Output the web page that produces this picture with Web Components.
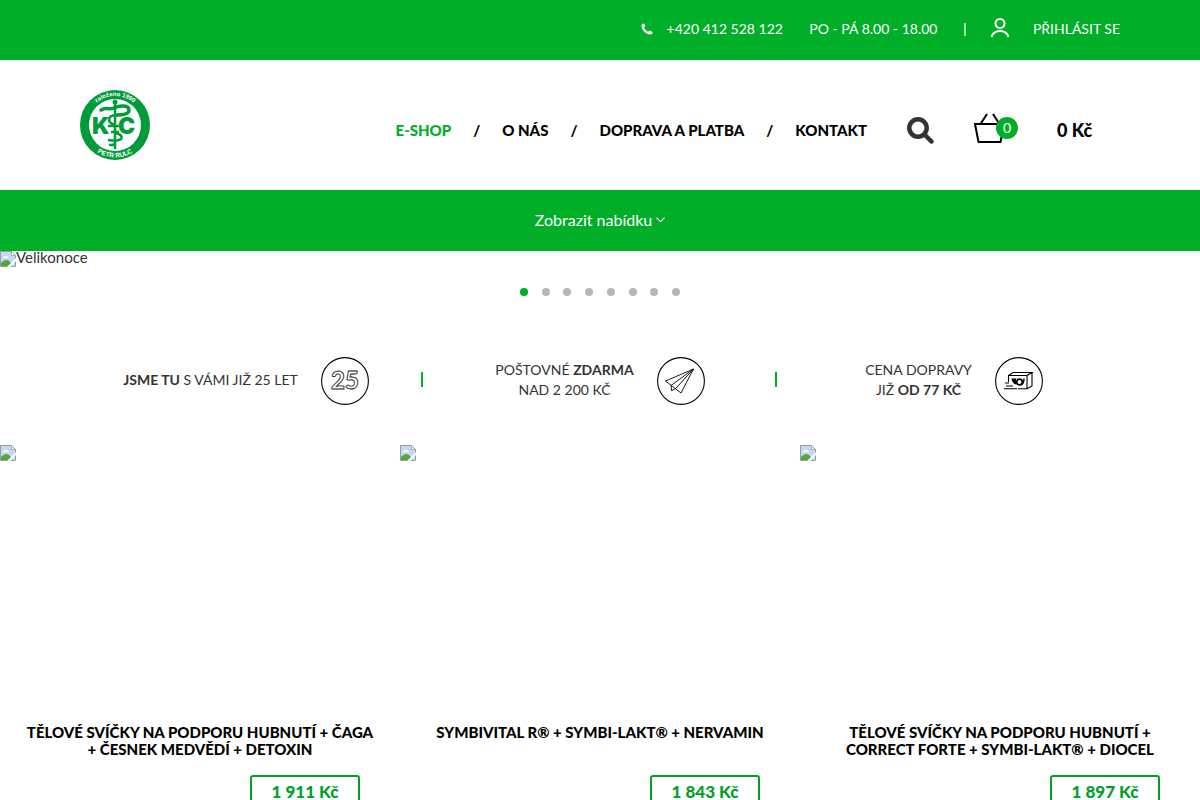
<!DOCTYPE html>
<html lang="cs">
<head>
<meta charset="utf-8">
<meta name="viewport" content="width=device-width, initial-scale=1">
<title>KC Petr Rulc</title>
<style>
body { margin: 0; background: #fff; color: #333; font: 14px/20px Lato, "Noto Sans", sans-serif; }
</style>
</head>
<body>
<shop-topbar></shop-topbar>
<shop-header></shop-header>
<shop-menu-toggle></shop-menu-toggle>
<main>
  <shop-carousel label="Velikonoce" count="8"></shop-carousel>
  <shop-benefits>
    <shop-benefit icon="years"><b>JSME TU</b> S VÁMI JIŽ 25 LET</shop-benefit>
    <shop-benefit icon="plane">POŠTOVNÉ <b>ZDARMA</b><br>NAD 2 200 KČ</shop-benefit>
    <shop-benefit icon="box">CENA DOPRAVY<br>JIŽ <b>OD 77 KČ</b></shop-benefit>
  </shop-benefits>
  <shop-products>
    <shop-product price="1 911 Kč">TĚLOVÉ SVÍČKY NA PODPORU HUBNUTÍ + ČAGA<br>+ ČESNEK MEDVĚDÍ + DETOXIN</shop-product>
    <shop-product price="1 843 Kč">SYMBIVITAL R® + SYMBI-LAKT® + NERVAMIN</shop-product>
    <shop-product price="1 897 Kč">TĚLOVÉ SVÍČKY NA PODPORU HUBNUTÍ +<br>CORRECT FORTE + SYMBI-LAKT® + DIOCEL</shop-product>
  </shop-products>
</main>
<script>
const base = `
  * { box-sizing: border-box; }
  a { color: inherit; text-decoration: none; }
  button { font: inherit; color: inherit; background: none; border: 0; padding: 0; cursor: pointer; }
  svg { display: block; flex: none; }
`;
function define(name, render) {
  customElements.define(name, class extends HTMLElement {
    connectedCallback() {
      if (this.shadowRoot) return;
      const t = document.createElement('template');
      const [css, html] = render(this);
      t.innerHTML = `<style>${base}${css}</style>${html}`;
      this.attachShadow({ mode: 'open' }).append(t.content.cloneNode(true));
    }
  });
}

define('shop-topbar', () => [`
  :host { display: flex; align-items: center; justify-content: flex-end; gap: 24px; height: 60px; padding: 0 80px 2px; box-sizing: border-box; background: #00ae28; color: #fff; }
  .phone { display: flex; align-items: center; gap: 14px; }
  .login { display: flex; align-items: center; gap: 23px; }
  .hours { min-width: 133px; text-align: center; }
  .sep { width: 2px; height: 13px; background: #a6e3b3; }
  .user { margin-bottom: 2px; }
`, `
  <a class="phone" href="tel:+420412528122">
    <svg width="12" height="12" viewBox="0 0 12 12"><path fill="#fff" d="M11.500 9.300c0 .9-.7 2.200-2.400 2.200C5.400 11.500.5 7 .5 3 .5 1.300 1.600.5 2.700.5c.5 0 .6.2.8.6l.9 1.900c.3.6-1.200 1.300-1.200 1.700C3.200 5.400 5.900 8.400 7 8.700c.5.100 1.200-1.300 1.700-1.100.5.100 2.800 1.300 2.800 1.700z"/></svg>
    <span>+420 412 528 122</span>
  </a>
  <span class="hours">PO - PÁ 8.00 - 18.00</span>
  <span class="sep"></span>
  <a class="login" href="#login">
    <svg class="user" width="20" height="20" viewBox="0 0 20 20" fill="none" stroke="#fff" stroke-width="2"><circle cx="10" cy="5.500" r="4.500"/><path d="M1.500 19c1.200-4 4.700-6 8.500-6s7.300 2 8.500 6"/></svg>
    <span>PŘIHLÁSIT SE</span>
  </a>
`]);

define('shop-header', () => [`
  :host { display: flex; align-items: center; justify-content: space-between; min-height: 130px; padding: 0 106px 0 80px; color: #000; font-size: 15px; font-weight: 900; }
  .right, nav, .basket { display: flex; align-items: center; }
  .right { gap: 40px; padding-top: 10px; }
  nav { gap: 22px; }
  .on { color: #00ae28; }
  .basket { gap: 39px; font-size: 18px; }
  .total { min-width: 37px; }
  .icon { position: relative; width: 44px; height: 34px; }
  .badge { position: absolute; right: 0; top: 4px; width: 22px; height: 22px; border-radius: 50%; background: #00ae28; color: #fff; font: 14px/22px Lato, sans-serif; text-align: center; }
`, `
  <a href="#home" aria-label="KC Petr Rulc">
    <svg width="70" height="70" viewBox="0 0 70 70">
      <defs><path id="top" d="M6 35a29 29 0 0 1 58 0"/><path id="bottom" d="M2.500 35a32.500 32.500 0 0 0 65 0"/></defs>
      <circle cx="35" cy="35" r="35" fill="#009b3a"/><circle cx="35" cy="35" r="26" fill="#fff"/>
      <g fill="#fff" font-family="Liberation Sans" font-weight="700" text-anchor="middle">
        <text font-size="6"><textPath href="#top" startOffset="50%">založeno 1990</textPath></text>
        <text font-size="6.500"><textPath href="#bottom" startOffset="50%">PETR RULC</textPath></text>
      </g>
      <g fill="none" stroke="#009b3a" stroke-linecap="round">
        <path stroke-width="2.500" d="M35 12v46"/>
        <path stroke-width="3.500" d="M21 20c5-3 9 0 13-2 6-3 15-3 15 2 0 4-6 5-12 5"/>
        <path stroke-width="2.500" d="M37 25c-5 0-8 2-8 5s3 4 6 5M35 43c5 1 8 3 6 6-2 2-8 2-12 1M35 54c-1 1-3 1-5 1"/>
      </g>
      <circle cx="35" cy="12" r="2.500" fill="#009b3a"/>
      <g fill="#009b3a" font-family="Inter, sans-serif" font-weight="900" font-size="23">
        <text x="12" y="44">K</text><text x="38" y="44">C</text>
      </g>
      <path stroke="#009b3a" stroke-width="2.500" d="M28 36h11M31 42h8"/>
    </svg>
  </a>
  <div class="right">
    <nav>
      <a class="on" href="#eshop">E-SHOP</a><span>/</span><a href="#about">O NÁS</a><span>/</span><a href="#delivery">DOPRAVA A PLATBA</a><span>/</span><a href="#contact">KONTAKT</a>
    </nav>
    <button aria-label="Hledat"><svg width="27" height="27" viewBox="0 0 27 27" fill="none" stroke="#333" stroke-width="4.500"><circle cx="11" cy="11" r="8.700"/><path stroke-linecap="round" d="m18 18 6.500 6.500"/></svg></button>
    <a class="basket" href="#basket">
      <span class="icon">
        <svg width="32" height="32" viewBox="0 0 32 32" fill="none" stroke="#000" stroke-width="2" stroke-linejoin="round"><path d="M1 11h29l-3.500 18H4.500zM6.500 11 13 1M19 1l6.500 10"/></svg>
        <span class="badge">0</span>
      </span>
      <span class="total">0 Kč</span>
    </a>
  </div>
`]);

define('shop-menu-toggle', () => [`
  :host { display: flex; justify-content: center; background: #00ae28; color: #fff; font-size: 16px; }
  button { display: flex; align-items: center; gap: 4px; height: 61px; padding-bottom: 2px; }
`, `
  <button><span>Zobrazit nabídku</span><svg width="9" height="6" viewBox="0 0 9 6" fill="none" stroke="#fff" stroke-width="1.200"><path d="m.5.700 4 4 4-4"/></svg></button>
`]);

/* Placeholder glyph for a picture that is not available */
define('missing-image', () => [`
  :host { display: block; width: 16px; height: 16px; }
`, `
  <svg width="16" height="16" viewBox="0 0 16 16">
    <path fill="#c5d8f6" d="M1 1h10l4 4v10H1z"/>
    <path fill="#fff" d="M3 7c0-2 2-2 2.500-1C6 4 9 5 8.500 7z"/>
    <path fill="#52a83a" d="M1 15v-3c3-3 6-4 8-2l3 3-2 2z"/>
    <path fill="none" stroke="#9b9b9b" d="M.5 15.500V.5h11l4 4v11z"/>
    <path fill="#fff" stroke="#9b9b9b" stroke-width=".8" d="M11.500.5v4h4z"/>
    <path fill="#fff" d="M16 7v3l-6 6H7z"/>
  </svg>
`]);

define('shop-carousel', el => [`
  :host { display: block; font-size: 15px; }
  .slide { display: flex; height: 37px; }
  .slide span { line-height: 13px; }
  .dots { display: flex; justify-content: space-between; width: 160px; margin: 0 auto; }
  .dots button { width: 8px; height: 8px; border-radius: 50%; background: #b7b7b7; }
  .dots .on { background: #00ae28; }
`, `
  <a class="slide" href="#slide"><missing-image></missing-image><span>${el.getAttribute('label')}</span></a>
  <div class="dots">${Array.from({ length: +el.getAttribute('count') }, (_, i) => `<button class="${i ? '' : 'on'}" aria-label="${i + 1}"></button>`).join('')}</div>
`]);

define('shop-benefits', () => [`
  :host { display: grid; grid-template-columns: repeat(3, 1fr); padding: 61px 69px 40px; }
  ::slotted(*:not(:last-child)) { background: linear-gradient(#00ae28, #00ae28) right 15px / 2px 15px no-repeat; }
`, `<slot></slot>`]);

const pictures = {
  years: `<text x="24" y="32" text-anchor="middle" font-family="Lato" font-weight="900" font-size="24" fill="#fff" stroke="#222" stroke-width=".9">25</text>`,
  plane: `<path stroke-width=".9" stroke-linejoin="round" d="M36.500 12 8.500 24 24 36zM36.500 12 14 28.500l.7 5.200 4.300-2.500z"/>`,
  box: `<path d="M13.500 25v-6.500h18.500v13.200h-9M13.500 18.500l4.500-3h19l-5 3M37 15.500V29l-5 2.700M10 26h4M11 29h7M9 31.700h13"/><path fill="#000" stroke="none" d="M16.500 21.500c.5 4 2.500 5.500 5 6l.5-2c-1.500-1-1.500-2.500-.5-4z"/><circle cx="24.500" cy="25" r="2.800" stroke-width="1.700"/><path stroke-width="1.400" d="M26.500 27.500c2-1 2.500-3 2.500-6"/>`
};
define('shop-benefit', el => [`
  :host { display: flex; align-items: center; justify-content: center; gap: 23px; height: 48px; text-align: center; }
  p { margin: 0 0 2px; }
`, `
  <p><slot></slot></p>
  <svg width="48" height="48" viewBox="0 0 48 48" fill="none" stroke="#000" stroke-width="1.100"><circle cx="24" cy="24" r="23.400"/>${pictures[el.getAttribute('icon')]}</svg>
`]);

define('shop-products', () => [`
  :host { display: grid; grid-template-columns: repeat(3, 1fr); }
`, `<slot></slot>`]);

define('shop-product', el => [`
  :host { display: block; color: #000; }
  a { display: block; }
  missing-image { margin-bottom: 263px; }
  h2 { margin: 0 0 17px; min-height: 34px; font-size: 15px; line-height: 17px; font-weight: 900; text-align: center; }
  .price { width: 110px; margin: 0 40px 0 auto; border: 2px solid #00a028; border-radius: 3px; color: #00a028; font-size: 17px; line-height: 30px; font-weight: 900; text-align: center; }
`, `
  <a href="#product"><missing-image></missing-image><h2><slot></slot></h2></a>
  <div class="price">${el.getAttribute('price')}</div>
`]);
</script>
</body>
</html>
